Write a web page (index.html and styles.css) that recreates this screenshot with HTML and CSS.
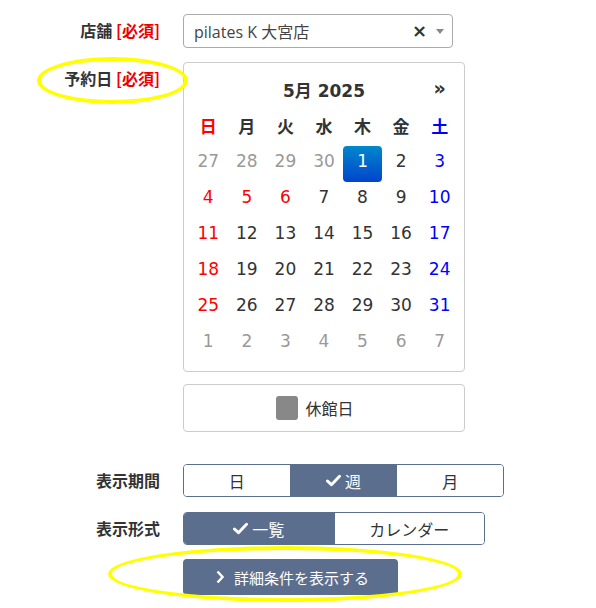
FILE: index.html
```html
<!DOCTYPE html>
<html lang="ja">
<head>
<meta charset="utf-8">
<title>予約</title>
<link rel="stylesheet" href="styles.css">
</head>
<body>
<div class="page">
  <div class="row row-store">
    <div class="label">店舗 <span class="req">[必須]</span></div>
    <div class="control">
      <div class="select">
        <span class="select-text">pilates K 大宮店</span>
        <span class="select-clear">×</span>
        <span class="select-arrow"></span>
      </div>
    </div>
  </div>

  <div class="row row-date">
    <div class="label label-date">予約日 <span class="req">[必須]</span></div>
    <div class="control">
      <div class="calendar">
        <table class="cal-table">
          <thead>
            <tr class="cal-head">
              <th class="prev"></th>
              <th class="switch" colspan="5">5月 2025</th>
              <th class="next">»</th>
            </tr>
            <tr class="dow">
              <th class="sun">日</th><th>月</th><th>火</th><th>水</th><th>木</th><th>金</th><th class="sat">土</th>
            </tr>
          </thead>
          <tbody>
            <tr><td class="old">27</td><td class="old">28</td><td class="old">29</td><td class="old">30</td><td><span class="active">1</span></td><td>2</td><td class="sat">3</td></tr>
            <tr><td class="sun">4</td><td class="sun">5</td><td class="sun">6</td><td>7</td><td>8</td><td>9</td><td class="sat">10</td></tr>
            <tr><td class="sun">11</td><td>12</td><td>13</td><td>14</td><td>15</td><td>16</td><td class="sat">17</td></tr>
            <tr><td class="sun">18</td><td>19</td><td>20</td><td>21</td><td>22</td><td>23</td><td class="sat">24</td></tr>
            <tr><td class="sun">25</td><td>26</td><td>27</td><td>28</td><td>29</td><td>30</td><td class="sat">31</td></tr>
            <tr><td class="old">1</td><td class="old">2</td><td class="old">3</td><td class="old">4</td><td class="old">5</td><td class="old">6</td><td class="old">7</td></tr>
          </tbody>
        </table>
      </div>
      <div class="legend">
        <span class="legend-swatch"></span>
        <span class="legend-text">休館日</span>
      </div>
    </div>
  </div>

  <div class="row row-period">
    <div class="label label-btn">表示期間</div>
    <div class="control">
      <div class="btn-group group-period">
        <span class="seg">日</span>
        <span class="seg seg-active"><svg class="check" viewBox="0 0 16 14"><path d="M1.5 7.5 L5.8 11.5 L14.5 2.5" fill="none" stroke="#fff" stroke-width="3.2" stroke-linecap="round" stroke-linejoin="round"/></svg>週</span>
        <span class="seg">月</span>
      </div>
    </div>
  </div>

  <div class="row row-format">
    <div class="label label-btn">表示形式</div>
    <div class="control">
      <div class="btn-group group-format">
        <span class="seg seg-active"><svg class="check" viewBox="0 0 16 14"><path d="M1.5 7.5 L5.8 11.5 L14.5 2.5" fill="none" stroke="#fff" stroke-width="3.2" stroke-linecap="round" stroke-linejoin="round"/></svg>一覧</span>
        <span class="seg">カレンダー</span>
      </div>
    </div>
  </div>

  <div class="row row-detail">
    <div class="label"></div>
    <div class="control">
      <button class="detail-btn" type="button"><svg class="chev" viewBox="0 0 8 14"><path d="M1.5 1.5 L6.5 7 L1.5 12.5" fill="none" stroke="#fff" stroke-width="2.4"/></svg>詳細条件を表示する</button>
    </div>
  </div>

  <div class="mark mark-date"></div>
  <div class="mark mark-detail"></div>
</div>
</body>
</html>
```

FILE: styles.css
```css
* { box-sizing: border-box; }
html, body { margin: 0; padding: 0; background: #fff; }
body {
  font-family: "DejaVu Sans", "Noto Sans CJK JP", sans-serif;
  color: #333;
  width: 596px;
  height: 608px;
  overflow: hidden;
}
.page { position: relative; padding-top: 14px; }
.row { display: flex; align-items: flex-start; }
.label {
  width: 160px;
  flex: none;
  text-align: right;
  font-weight: bold;
  font-size: 16px;
  line-height: 20px;
  color: #333;
  font-family: "Noto Sans CJK JP", sans-serif;
}
.req { color: #e00; }
.control { margin-left: 23px; }

.row-store .label { padding-top: 6px; }
.select {
  width: 270px;
  height: 34px;
  border: 1px solid #aaa;
  border-radius: 4px;
  display: flex;
  align-items: center;
  padding: 0 8px 0 10px;
}
.select-text {
  flex: 1;
  font-size: 16px;
  color: #444;
  font-family: "Open Sans", "Noto Sans CJK JP", sans-serif;
}
.select-clear {
  font-weight: bold;
  font-size: 18px;
  color: #333;
  margin-right: 9px;
  line-height: 1;
}
.select-arrow {
  width: 0; height: 0;
  border-left: 4px solid transparent;
  border-right: 4px solid transparent;
  border-top: 5px solid #888;
}

.row-date { margin-top: 14px; }
.label-date { padding-top: 6px; }
.calendar {
  width: 282px;
  height: 310px;
  border: 1px solid #ccc;
  border-radius: 4px;
  padding: 8px 5px 12px;
}
.cal-table {
  width: 270px;
  border-collapse: collapse;
  table-layout: fixed;
}
.cal-table th, .cal-table td {
  height: 36px;
  padding: 0;
  text-align: center;
  vertical-align: middle;
  font-size: 17px;
}
.cal-head th { font-weight: bold; color: #333; }
.cal-head .switch { font-size: 17px; }
.cal-head .next { font-size: 19px; padding-bottom: 2px; }
.dow th { font-weight: bold; color: #333; font-family: "Noto Sans CJK JP", sans-serif; font-size: 17px; }
.cal-table td { color: #333; font-weight: normal; }
.cal-table .sun { color: #f00; }
.cal-table .sat { color: #00f; }
.cal-table td.old { color: #999; }
.active {
  display: flex;
  align-items: center;
  justify-content: center;
  width: 39px;
  height: 36px;
  margin: 3px auto -3px;
  padding-bottom: 6px;
  border-radius: 4px;
  color: #fff;
  background: linear-gradient(to bottom, #0088cc, #0044cc);
}

.legend {
  margin-top: 12px;
  width: 282px;
  height: 48px;
  border: 1px solid #ccc;
  border-radius: 4px;
  display: flex;
  align-items: center;
  justify-content: center;
  padding-right: 18px;
}
.legend-swatch {
  width: 22px;
  height: 24px;
  background: #888;
  border-radius: 3px;
  margin-right: 7px;
}
.legend-text {
  font-family: "Noto Sans CJK JP", sans-serif;
  font-size: 16px;
  color: #333;
}

.row-period { margin-top: 32px; }
.row-format { margin-top: 15px; }
.label-btn { padding-top: 6px; }
.btn-group {
  display: flex;
  height: 33px;
  border: 1px solid #5b6e8d;
  border-radius: 4px;
  overflow: hidden;
}
.group-period { width: 321px; }
.group-format { width: 302px; }
.seg {
  flex: 1;
  display: flex;
  align-items: center;
  justify-content: center;
  font-family: "Noto Sans CJK JP", sans-serif;
  font-size: 16px;
  color: #333;
  background: #fff;
}
.group-period .seg + .seg, .group-format .seg + .seg { border-left: 1px solid #5b6e8d; }
.seg-active { background: #5b6e8d; color: #fff; }
.check { width: 15px; height: 13px; margin-right: 4px; }

.row-detail { margin-top: 14px; }
.detail-btn {
  width: 215px;
  height: 36px;
  border: none;
  border-radius: 4px;
  background: #5b6e8d;
  color: #fff;
  font-family: "Noto Sans CJK JP", sans-serif;
  font-size: 15px;
  display: flex;
  align-items: center;
  justify-content: center;
  padding: 0 0 0 4px;
}
.chev { width: 8px; height: 14px; margin-right: 10px; }

.mark {
  position: absolute;
  border: 4px solid #ffff00;
  border-radius: 50%;
  pointer-events: none;
}
.mark-date { left: 37px; top: 57px; width: 151px; height: 47px; }
.mark-detail { left: 108px; top: 546px; width: 354px; height: 56px; }
```
